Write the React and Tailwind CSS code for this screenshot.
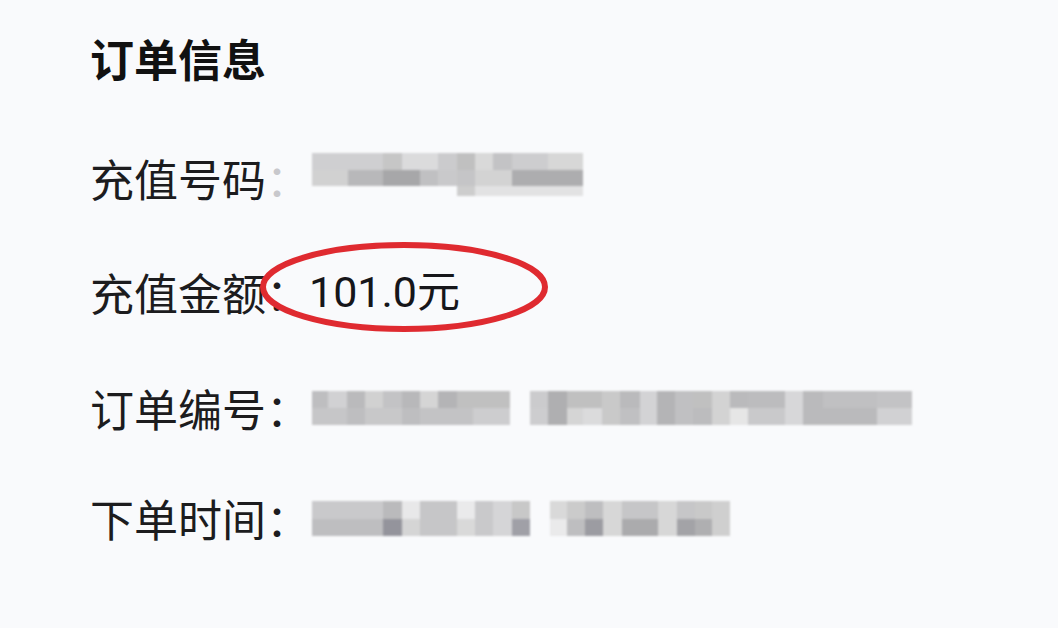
import React from 'react';

// mosaic rows: each row is a list of [width, colour]
const phoneMosaic = [
    { h: 17, cells: [[71, '#dadadc'], [19, '#d0d0d0'], [36, '#e6e6e8'], [19, '#d6d6d8'], [18, '#cacaca'], [18, '#e4e4e4'], [19, '#cdcdcf'], [36, '#d8d8da'], [35, '#e2e2e2']] },
    { h: 16, cells: [[36, '#dcdcdc'], [35, '#c2c2c4'], [37, '#b0b0b2'], [18, '#cacacc'], [19, '#d4d4d6'], [18, '#cfcfd1'], [37, '#dedede'], [71, '#b6b6b8']] },
    { h: 10, cells: [[145, 'transparent'], [18, '#d8d8d8'], [108, '#eeeeef']] },
];

const orderMosaic = [
    {
        h: 17,
        cells: [[16, '#c8c8ca'], [19, '#dcdcde'], [18, '#c4c4c6'], [18, '#dcdcdc'], [19, '#cdcdcf'], [18, '#c2c2c4'], [18, '#e0e0e0'], [19, '#bebec0'], [53, '#cacaca'], [20, 'transparent'],
            [18, '#d6d6d8'], [19, '#b8b8ba'], [16, '#cacaca'], [19, '#cacaca'], [18, '#d4d4d4'], [20, '#c4c4c6'], [17, '#dedee0'], [18, '#bebec0'], [18, '#cacacc'], [19, '#cacaca'], [18, '#dedede'], [18, '#c4c4c6'], [37, '#c6c6c8'], [18, '#e2e2e4'], [20, '#c4c4c6'], [54, '#cacacc'], [35, '#cdcdcf']],
    },
    {
        h: 17,
        cells: [[35, '#d0d0d2'], [18, '#c8c8ca'], [37, '#d2d2d4'], [18, '#c8c8ca'], [53, '#cdcdcf'], [37, '#d8d8da'], [20, 'transparent'],
            [18, '#d8d8da'], [19, '#b8b8ba'], [16, '#e0e0e0'], [19, '#e6e6e8'], [18, '#d4d4d4'], [20, '#cacacc'], [17, '#dedee0'], [18, '#bebec0'], [18, '#cacacc'], [19, '#c6c6c8'], [18, '#dedede'], [18, '#f2f2f2'], [37, '#d4d4d6'], [18, '#e2e2e4'], [20, '#c4c4c6'], [54, '#c4c4c6'], [35, '#dcdcde']],
    },
];

const timeMosaic = [
    {
        h: 18,
        cells: [[71, '#d4d4d6'], [19, '#c4c4c6'], [18, '#f4f4f5'], [37, '#d0d0d2'], [18, '#f6f6f7'], [18, '#d4d4d6'], [19, '#e0e0e2'], [18, '#d2d2d2'], [20, 'transparent'],
            [17, '#e4e4e4'], [18, '#d6d6d6'], [18, '#c8c8ca'], [19, '#e2e2e2'], [36, '#d0d0d2'], [19, '#e2e2e2'], [18, '#d0d0d2'], [17, '#d4d4d4'], [18, '#dadada']],
    },
    {
        h: 17,
        cells: [[71, '#c8c8ca'], [19, '#9c9ca4'], [18, '#e0e0e0'], [37, '#d0d0d2'], [18, '#e4e4e4'], [18, '#d4d4d6'], [19, '#e0e0e2'], [18, '#a8a8b0'], [20, 'transparent'],
            [17, '#f6f6f7'], [18, '#c8c8ca'], [18, '#a4a4aa'], [19, '#e2e2e2'], [36, '#b4b4b6'], [19, '#e2e2e2'], [18, '#acacb0'], [17, '#b8b8ba'], [18, '#dadada']],
    },
];

const Mosaic = ({ rows, className = '' }) => (
    <div className={`flex flex-col blur-[0.8px] brightness-95 ${className}`}>
        {rows.map((row, i) => (
            <div key={i} className="flex">
                {row.cells.map(([w, c], j) => (
                    <div key={j} style={{ width: w, height: row.h, background: c }} />
                ))}
            </div>
        ))}
    </div>
);

const Label = ({ children }) => (
    <span className="w-[220px] shrink-0 text-[44px] leading-none text-[#1c1c1e]">{children}</span>
);

export default function App() {
    return (
        <div
            className="min-h-[628px] w-[1058px] overflow-hidden bg-[#f9fafc] pl-[90px] pt-[28px]"
            style={{ fontFamily: '"Noto Sans CJK SC", "Noto Sans", sans-serif' }}
        >
            <div className="flex h-[60px] items-center text-[44px] font-bold leading-none text-[#111]">
                订单信息
            </div>

            <div className="mt-[60px] flex h-[60px] items-center">
                <Label>
                    充值号码<span className="text-[#c8c8cc]">：</span>
                </Label>
                <Mosaic rows={phoneMosaic} className="mb-[7px] ml-[2px]" />
            </div>

            <div className="relative mt-[54px] flex h-[60px] items-center">
                <Label>充值金额：</Label>
                <span
                    className="-ml-[1px] text-[43px] leading-none text-[#16161a]"
                    style={{ fontFamily: 'Roboto, "Noto Sans CJK SC", sans-serif' }}
                >
                    101.0元
                </span>
                <svg
                    className="pointer-events-none absolute left-[168px] top-[-22px]"
                    width="296"
                    height="96"
                    viewBox="0 0 296 96"
                >
                    <ellipse cx="146" cy="47" rx="141" ry="42" fill="none" stroke="#df2a30" strokeWidth="6" />
                </svg>
            </div>

            <div className="mt-[56px] flex h-[60px] items-center">
                <Label>订单编号：</Label>
                <Mosaic rows={orderMosaic} className="ml-[2px]" />
            </div>

            <div className="mt-[50px] flex h-[60px] items-center">
                <Label>下单时间：</Label>
                <Mosaic rows={timeMosaic} className="ml-[2px]" />
            </div>
        </div>
    );
}
